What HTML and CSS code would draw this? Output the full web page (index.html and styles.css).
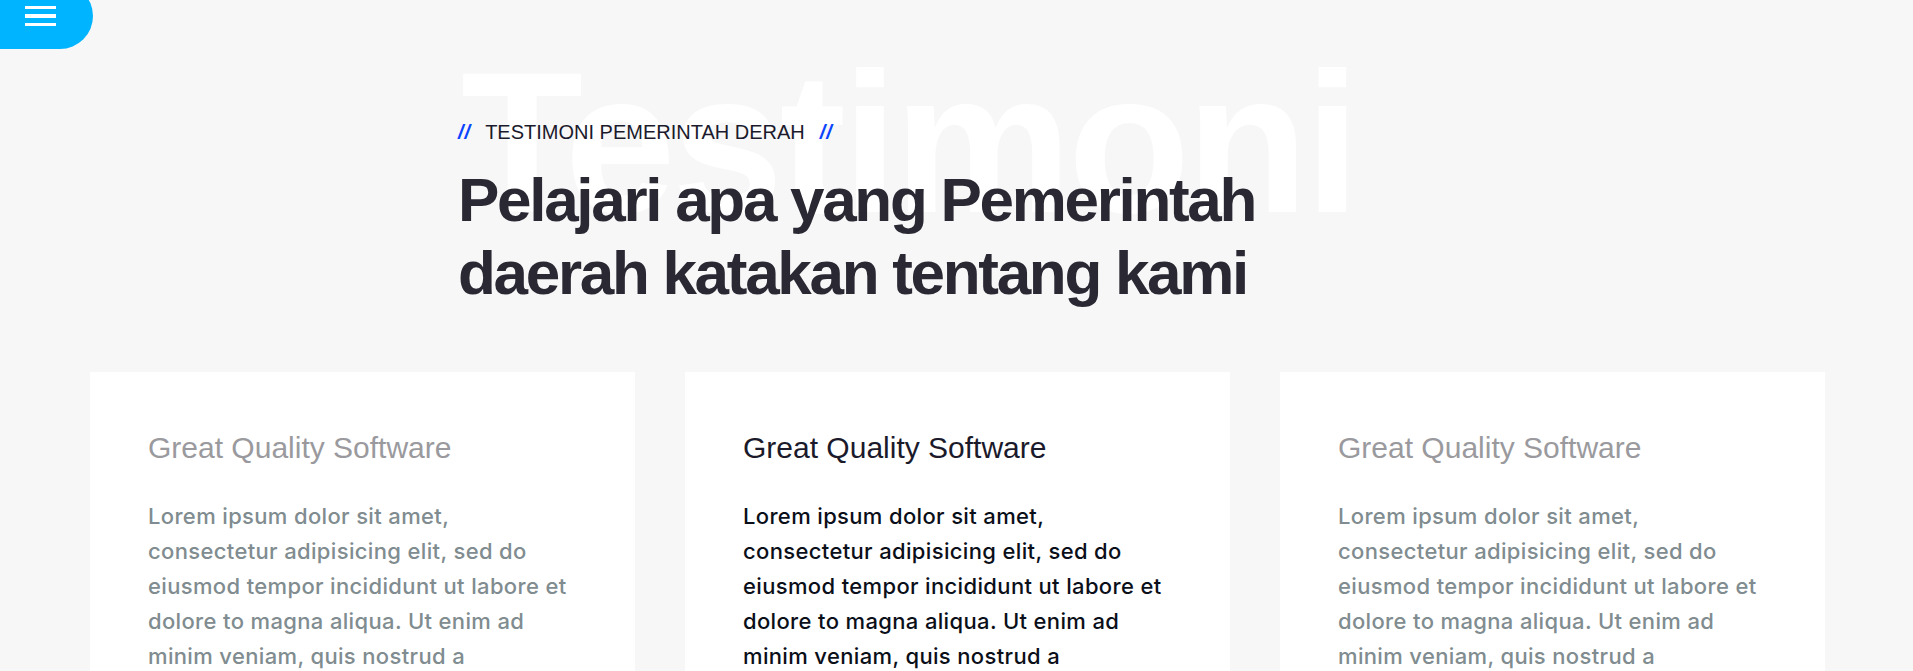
FILE: index.html
```html
<!DOCTYPE html>
<html lang="id">
<head>
<meta charset="utf-8">
<title>Testimoni</title>
<link rel="stylesheet" href="styles.css">
</head>
<body>
<button class="menu-toggle" aria-label="Menu">
  <span class="bar"></span>
  <span class="bar"></span>
  <span class="bar"></span>
</button>

<section class="testimonials">
  <div class="section-head">
    <div class="bg-word" aria-hidden="true">Testimoni</div>
    <p class="eyebrow"><span class="slashes">//</span>TESTIMONI PEMERINTAH DERAH<span class="slashes slashes-end">//</span></p>
    <h2 class="title">Pelajari apa yang Pemerintah<br>daerah katakan tentang kami</h2>
  </div>

  <div class="cards">
    <article class="card">
      <h3 class="card-title">Great Quality Software</h3>
      <p class="card-text">Lorem ipsum dolor sit amet, consectetur adipisicing elit, sed do eiusmod tempor incididunt ut labore et dolore to magna aliqua. Ut enim ad minim veniam, quis nostrud a exercitation ullamco laboris nisi ut aliquip ex ea commodo consequat.</p>
    </article>
    <article class="card card-active">
      <h3 class="card-title">Great Quality Software</h3>
      <p class="card-text">Lorem ipsum dolor sit amet, consectetur adipisicing elit, sed do eiusmod tempor incididunt ut labore et dolore to magna aliqua. Ut enim ad minim veniam, quis nostrud a exercitation ullamco laboris nisi ut aliquip ex ea commodo consequat.</p>
    </article>
    <article class="card">
      <h3 class="card-title">Great Quality Software</h3>
      <p class="card-text">Lorem ipsum dolor sit amet, consectetur adipisicing elit, sed do eiusmod tempor incididunt ut labore et dolore to magna aliqua. Ut enim ad minim veniam, quis nostrud a exercitation ullamco laboris nisi ut aliquip ex ea commodo consequat.</p>
    </article>
  </div>
</section>
</body>
</html>
```
FILE: styles.css
```css
html, body {
  margin: 0;
  padding: 0;
}

body {
  background: #f7f7f7;
  font-family: "Liberation Sans", Arial, sans-serif;
  color: #2a2833;
  overflow-x: hidden;
}

.menu-toggle {
  position: fixed;
  top: -17px;
  left: 0;
  width: 93px;
  height: 66px;
  padding: 23px 0 0 25px;
  box-sizing: border-box;
  border: 0;
  border-radius: 0 33px 33px 0;
  background: #00b4ff;
  display: flex;
  flex-direction: column;
  gap: 5px;
  cursor: pointer;
  z-index: 10;
}

.menu-toggle .bar {
  display: block;
  width: 31px;
  height: 3.4px;
  background: #ffffff;
}

.testimonials {
  padding: 120px 88px 0 90px;
}

.section-head {
  position: relative;
  margin-left: 368px;
  padding-bottom: 63px;
}

.bg-word {
  position: absolute;
  top: -77px;
  left: 3px;
  font-size: 200px;
  line-height: 200px;
  font-weight: 700;
  letter-spacing: -3.8px;
  color: #ffffff;
  white-space: nowrap;
  z-index: 0;
  user-select: none;
}

.eyebrow {
  position: relative;
  z-index: 1;
  margin: 0;
  font-size: 20px;
  line-height: 24px;
  color: #1b1a2c;
  display: flex;
  align-items: center;
}

.slashes {
  color: #0a44ff;
  font-weight: 700;
  font-style: italic;
  letter-spacing: 1px;
  margin-right: 14px;
}

.slashes-end {
  margin-right: 0;
  margin-left: 15px;
}

.title {
  position: relative;
  z-index: 1;
  margin: 19px 0 0;
  font-size: 62px;
  line-height: 73px;
  font-weight: 700;
  letter-spacing: -2.3px;
  color: #2a2833;
}

.cards {
  display: grid;
  grid-template-columns: repeat(3, 545px);
  column-gap: 50px;
}

.card {
  background: #ffffff;
  padding: 58px 58px 58px 58px;
  min-height: 400px;
}

.card-title {
  margin: 0 0 33px;
  font-family: "Liberation Sans", Arial, sans-serif;
  font-size: 30px;
  line-height: 36px;
  font-weight: 400;
  color: #9a9a9e;
}

.card-text {
  margin: 0;
  font-family: Inter, "Noto Sans", sans-serif;
  font-size: 22px;
  line-height: 35px;
  font-weight: 500;
  letter-spacing: 0.35px;
  color: #808c8f;
}

.card-active .card-title {
  color: #1b1a2b;
}

.card-active .card-text {
  color: #0b0f19;
}
```
